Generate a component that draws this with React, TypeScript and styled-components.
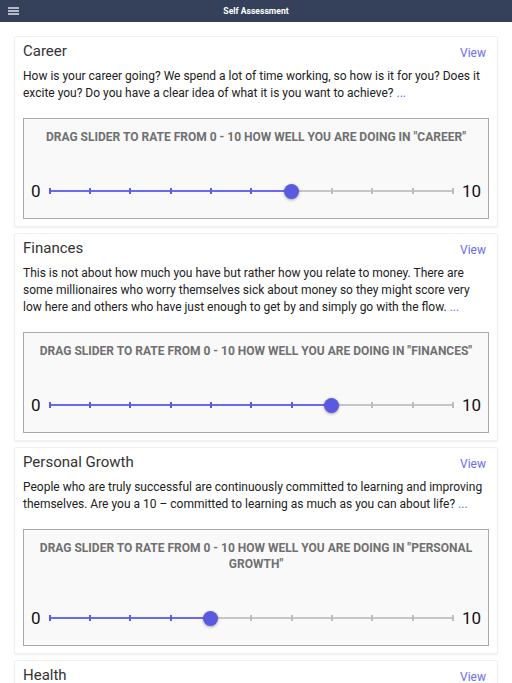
import React from "react";
import styled, { createGlobalStyle } from "styled-components";

const Global = createGlobalStyle`
  html, body { margin: 0; padding: 0; background: #ffffff; }
  body { font-family: Roboto, "Liberation Sans", Arial, sans-serif; -webkit-font-smoothing: antialiased; }
  * { box-sizing: border-box; }
`;

const Page = styled.div`
  display: flex;
  flex-direction: column;
  width: 512px;
`;

const Header = styled.header`
  height: 22px;
  background: #35415a;
  display: flex;
  align-items: center;
  justify-content: center;
  position: relative;
`;

const MenuButton = styled.div`
  position: absolute;
  left: 8px;
  top: 7px;
  width: 11px;
  height: 8px;
  display: flex;
  flex-direction: column;
  justify-content: space-between;
`;

const MenuBar = styled.span`
  display: block;
  height: 2px;
  background: #b4bac5;
`;

const HeaderTitle = styled.div`
  color: #ffffff;
  font-size: 8.6px;
  font-weight: 700;
  line-height: 22px;
`;

const List = styled.main`
  display: flex;
  flex-direction: column;
  gap: 6px;
  padding: 14px 14px 0;
`;

const Card = styled.section`
  background: #ffffff;
  border: 1px solid #f0f0f0;
  border-radius: 2px;
  box-shadow: 0 1px 2px rgba(0, 0, 0, 0.07);
  padding: 4px 8px 7px;
  display: flex;
  flex-direction: column;
`;

const CardHead = styled.div`
  display: flex;
  align-items: center;
  justify-content: space-between;
  height: 20px;
`;

const CardTitle = styled.h2`
  margin: 0;
  font-size: 15px;
  font-weight: 400;
  color: #333333;
  line-height: 20px;
`;

const ViewLink = styled.a`
  font-size: 12px;
  color: #6a6cf2;
  margin-right: 3px;
  margin-top: 4px;
  text-decoration: none;
`;

const Description = styled.p`
  margin: 7px 0 0;
  font-size: 12px;
  line-height: 17px;
  color: #212121;
`;

const More = styled.span`
  color: #5b6cf0;
`;

const RateBox = styled.div`
  margin-top: 16px;
  background: #f9f9f9;
  border: 1px solid #a9a9a9;
  padding: 10px 0 17px;
  display: flex;
  flex-direction: column;
`;

const RateTitle = styled.div`
  font-size: 12px;
  font-weight: 700;
  color: #707070;
  text-align: center;
  line-height: 16px;
  padding: 0 10px;
  text-transform: uppercase;
`;

const SliderRow = styled.div`
  margin-top: 36px;
  height: 20px;
  display: flex;
  align-items: center;
  gap: 9px;
  padding: 0 7px 0 7px;
`;

const EndLabel = styled.span`
  font-size: 17px;
  color: #111111;
  line-height: 20px;
`;

const Track = styled.div`
  position: relative;
  flex: 1;
  height: 20px;
`;

const Rail = styled.div<{ $active?: boolean }>`
  position: absolute;
  top: 9px;
  height: 2px;
  background: ${(p) => (p.$active ? "#6a6af0" : "#c6c6c6")};
`;

const Tick = styled.span<{ $active?: boolean }>`
  position: absolute;
  top: 7px;
  width: 2px;
  height: 6px;
  margin-left: -1px;
  background: ${(p) => (p.$active ? "#5b5be6" : "#bdbdbd")};
`;

const Thumb = styled.span`
  position: absolute;
  top: 2.5px;
  width: 15px;
  height: 15px;
  margin-left: -7.5px;
  border-radius: 50%;
  background: #5a5ae0;
  box-shadow: 0 1px 3px rgba(0, 0, 0, 0.35);
`;

type Item = { title: string; text: string; value: number };

const items: Item[] = [
  {
    title: "Career",
    text: "How is your career going? We spend a lot of time working, so how is it for you? Does it excite you? Do you have a clear idea of what it is you want to achieve?",
    value: 6,
  },
  {
    title: "Finances",
    text: "This is not about how much you have but rather how you relate to money. There are some millionaires who worry themselves sick about money so they might score very low here and others who have just enough to get by and simply go with the flow.",
    value: 7,
  },
  {
    title: "Personal Growth",
    text: "People who are truly successful are continuously committed to learning and improving themselves. Are you a 10 \u2013 committed to learning as much as you can about life?",
    value: 4,
  },
  {
    title: "Health",
    text: "How healthy are you? Do you eat well, exercise regularly and get enough sleep? Do you have the energy to do the things you want to do?",
    value: 5,
  },
];

const Slider: React.FC<{ value: number }> = ({ value }) => {
  const pct = (value / 10) * 100;
  return (
    <SliderRow>
      <EndLabel>0</EndLabel>
      <Track>
        <Rail $active style={{ left: 0, width: `${pct}%` }} />
        <Rail style={{ left: `${pct}%`, right: 0 }} />
        {Array.from({ length: 11 }).map((_, i) => (
          <Tick key={i} $active={i <= value} style={{ left: `${i * 10}%` }} />
        ))}
        <Thumb style={{ left: `${pct}%` }} />
      </Track>
      <EndLabel>10</EndLabel>
    </SliderRow>
  );
};

export default function App() {
  return (
    <>
      <Global />
      <Page>
        <Header>
          <MenuButton>
            <MenuBar />
            <MenuBar />
            <MenuBar />
          </MenuButton>
          <HeaderTitle>Self Assessment</HeaderTitle>
        </Header>
        <List>
          {items.map((it) => (
            <Card key={it.title}>
              <CardHead>
                <CardTitle>{it.title}</CardTitle>
                <ViewLink>View</ViewLink>
              </CardHead>
              <Description>
                {it.text} <More>...</More>
              </Description>
              <RateBox>
                <RateTitle>
                  Drag slider to rate from 0 - 10 how well you are doing in "{it.title}"
                </RateTitle>
                <Slider value={it.value} />
              </RateBox>
            </Card>
          ))}
        </List>
      </Page>
    </>
  );
}
